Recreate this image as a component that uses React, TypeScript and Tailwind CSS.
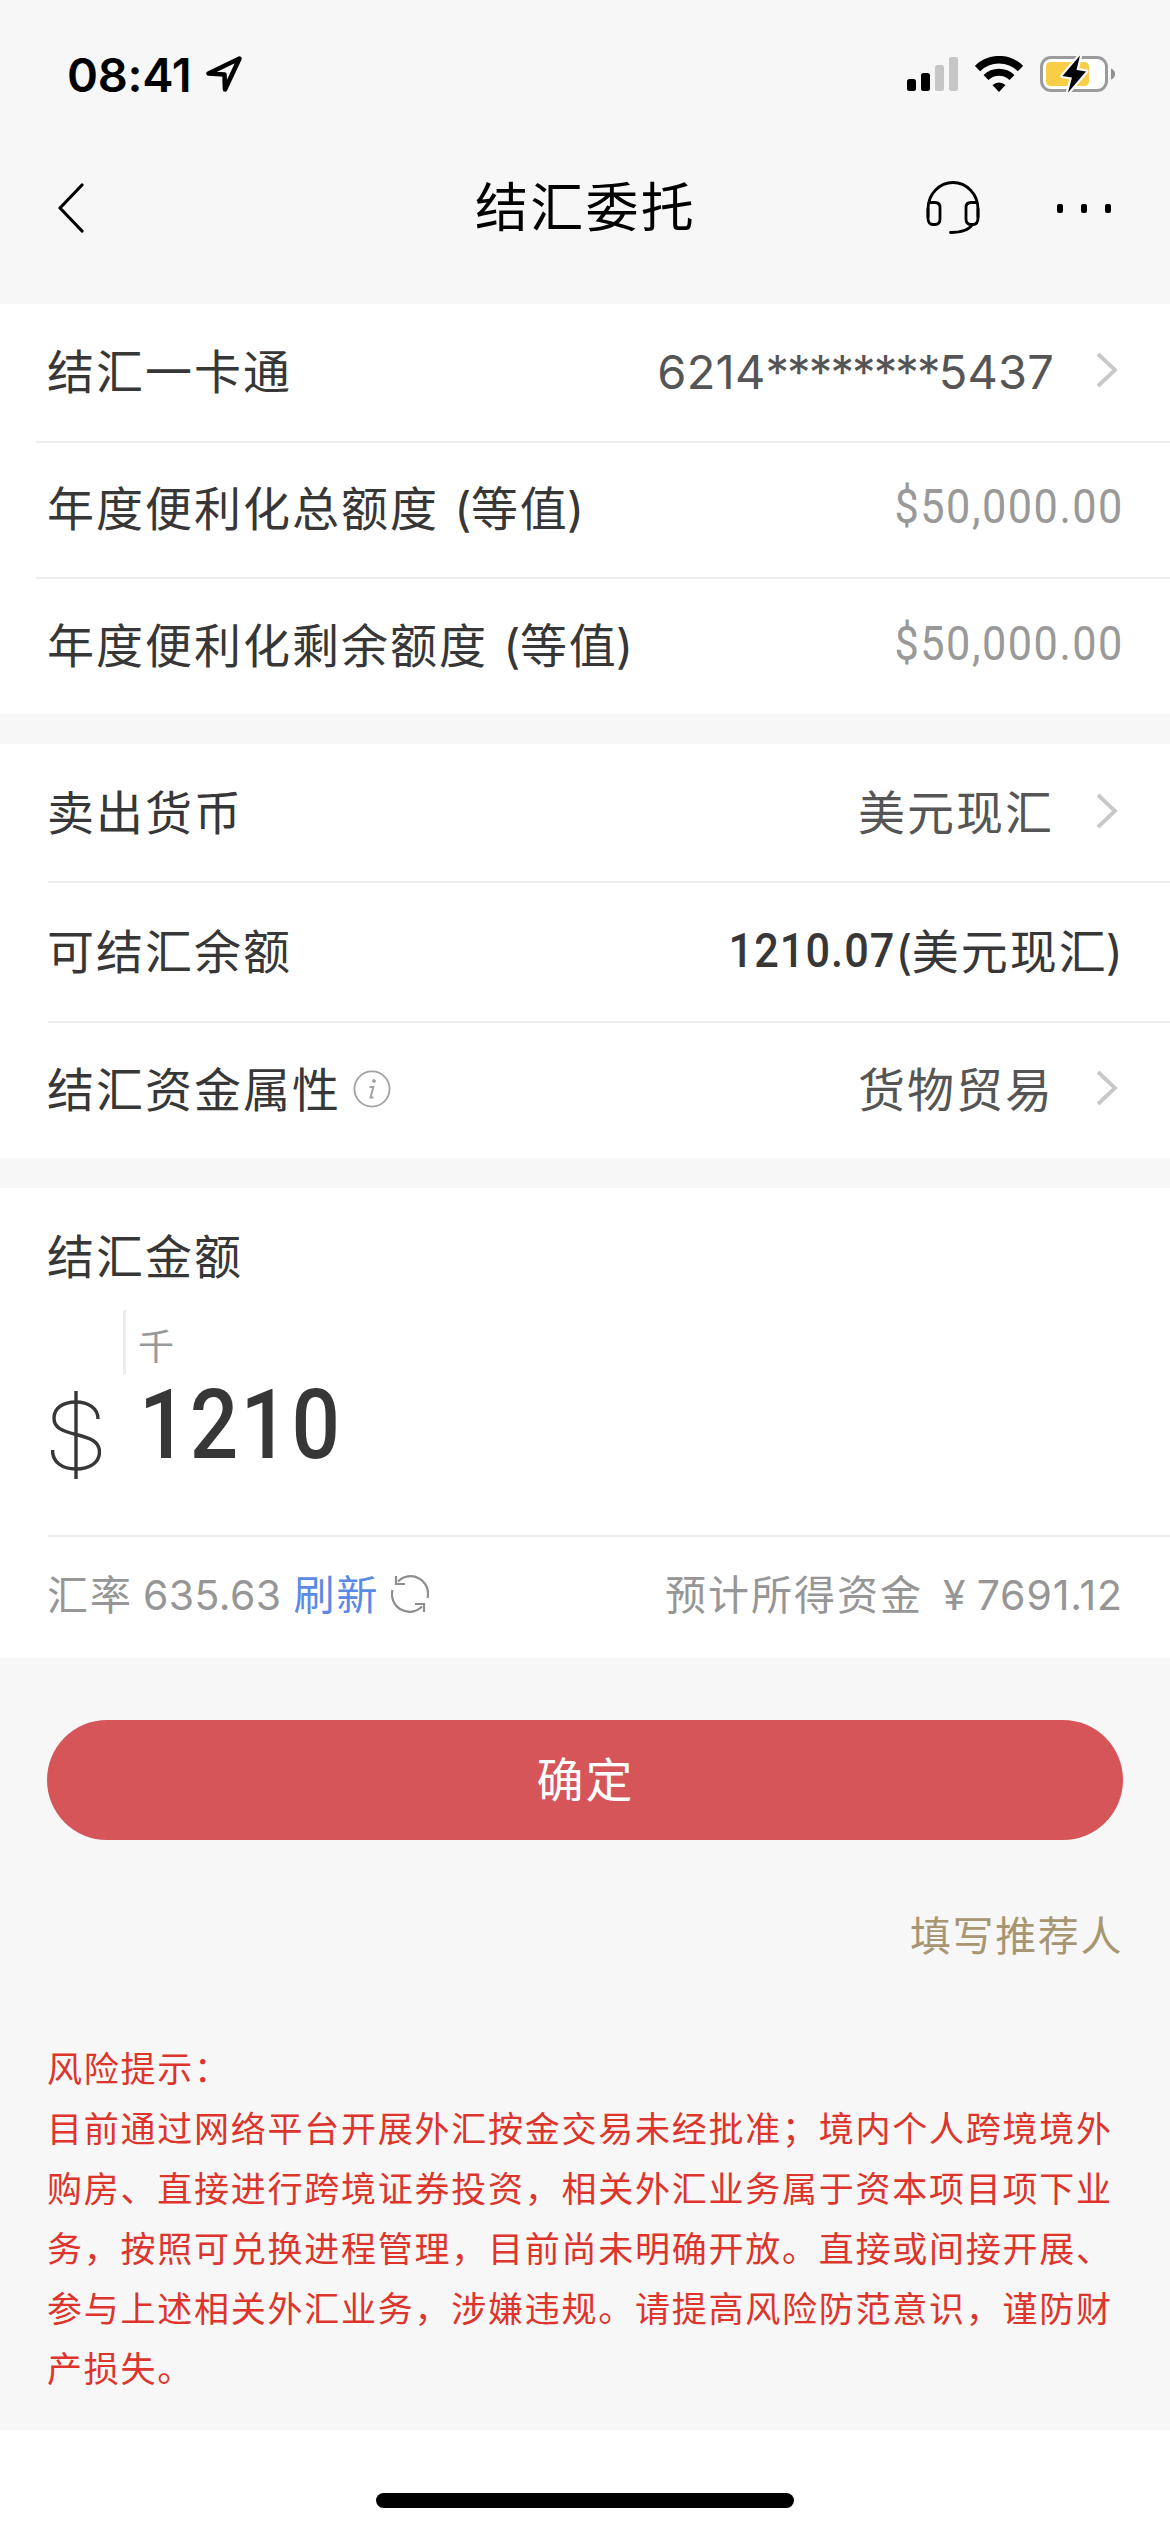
import type { ReactNode } from 'react';

const RISK_LINES = [
    '目前通过网络平台开展外汇按金交易未经批准；境内个人跨境境外',
    '购房、直接进行跨境证券投资，相关外汇业务属于资本项目项下业',
    '务，按照可兑换进程管理，目前尚未明确开放。直接或间接开展、',
    '参与上述相关外汇业务，涉嫌违规。请提高风险防范意识，谨防财',
    '产损失。',
];

function StatusBar() {
    return (
        <div className="h-[148px] pl-[67px] pr-[54px] flex items-center justify-between text-black">
            <div className="flex items-center">
                <span className="w-[138px] text-[47px] leading-none font-semibold tracking-[-0.3px]">08:41</span>
                <svg width="38" height="38" viewBox="0 0 38 38" fill="none" stroke="currentColor" strokeWidth="4.6" strokeLinejoin="round">
                    <path d="M34.5 3.5 L3.5 18.5 L19.5 19.5 L20 34.5 Z" />
                </svg>
            </div>
            <div className="flex items-center">
                <svg width="52" height="36" viewBox="0 0 52 36">
                    <rect x="0" y="23" width="9" height="12" rx="2.5" fill="#000" />
                    <rect x="14" y="17" width="9" height="18" rx="2.5" fill="#000" />
                    <rect x="28" y="9" width="9" height="26" rx="2.5" fill="#c6c6c6" />
                    <rect x="42" y="1" width="9" height="34" rx="2.5" fill="#c6c6c6" />
                </svg>
                <svg className="ml-4" width="48" height="36" viewBox="0 0 48 36" fill="none">
                    <path d="M2.5 12.5 A30.5 30.5 0 0 1 45.5 12.5" stroke="#000" strokeWidth="7.5" />
                    <path d="M11 21.5 A18.5 18.5 0 0 1 37 21.5" stroke="#000" strokeWidth="7" />
                    <path d="M24 36 L17.5 29 A9.5 9.5 0 0 1 30.5 29 Z" fill="#000" />
                </svg>
                <svg className="ml-[17px]" width="76" height="38" viewBox="0 0 76 38">
                    <rect x="1.5" y="2.5" width="65" height="33" rx="9.5" fill="#fff" stroke="#9b9b9d" strokeWidth="3" />
                    <path d="M71 13.5 Q75 15 75 19 Q75 23 71 24.5 Z" fill="#8f8f91" />
                    <rect x="6" y="7" width="43" height="24" rx="4.5" fill="#f8ce46" />
                    <path d="M40 0.5 L22.5 21 L32 22.5 L28 37.5 L46 16.5 L36.5 15 Z" fill="#000" stroke="#f7f7f7" strokeWidth="4.5" strokeLinejoin="round" paintOrder="stroke" />
                </svg>
            </div>
        </div>
    );
}

function NavBar() {
    return (
        <div className="h-[156px] pb-[36px] px-[56px] grid grid-cols-[1fr_auto_1fr] items-center text-black">
            <svg width="28" height="50" viewBox="0 0 28 50" fill="none" stroke="currentColor" strokeWidth="3.2" strokeLinecap="round" strokeLinejoin="round">
                <path d="M26 2 L4 25 L26 48" />
            </svg>
            <h1 className="pt-px pl-px text-[53px] leading-none tracking-[2.2px]">结汇委托</h1>
            <div className="flex items-center justify-end">
                <svg width="56" height="54" viewBox="0 0 56 54" fill="none" stroke="currentColor" strokeWidth="2.8" strokeLinecap="round">
                    <path d="M3 36 V28 A25 26.5 0 0 1 53 28 V36" />
                    <path d="M5 21.5 H10 Q15 21.5 15 26.5 V38 Q15 43.5 10 43.5 H8 Q3 43.5 3 37 V28" />
                    <path d="M51 21.5 H46 Q41 21.5 41 26.5 V38 Q41 43.5 46 43.5 H48 Q53 43.5 53 37 V28" />
                    <path d="M47 44 Q42 51.5 25.5 51.5" />
                </svg>
                <div className="ml-[76px] mr-[3px] flex gap-[18px]">
                    <i className="w-[6px] h-[9px] rounded-[2px] bg-black" />
                    <i className="w-[6px] h-[9px] rounded-[2px] bg-black" />
                    <i className="w-[6px] h-[9px] rounded-[2px] bg-black" />
                </div>
            </div>
        </div>
    );
}

function Chevron() {
    return (
        <svg className="ml-[42px] mr-[4px] mb-[3px]" width="22" height="36" viewBox="0 0 22 36" fill="none" stroke="#c8c8c8" strokeWidth="3.8">
            <path d="M2 2 L19 18 L2 34" />
        </svg>
    );
}

function Row({ label, className, children }: { label: ReactNode; className: string; children: ReactNode }) {
    return (
        <div className={`flex items-center justify-between pr-[48px] border-[#eeeeee] ${className}`}>
            <div className="-ml-px flex items-center text-[47px] leading-none tracking-[2px] text-[#373737] whitespace-pre">{label}</div>
            <div className="flex items-center text-[47px] leading-none tracking-[2px] text-[#555]">{children}</div>
        </div>
    );
}

function Parens({ children }: { children: string }) {
    return (
        <span className="whitespace-pre">
            <span className="tracking-[-0.5px]">(</span>
            {children}
            <span className="-ml-[2px] tracking-[-1px]">)</span>
        </span>
    );
}

function Quota() {
    return (
        <span className="-mr-[2px] mb-[3px] font-['Roboto'] font-normal text-[48px] tracking-[1.7px] text-[#999] origin-right scale-x-90">
            $50,000.00
        </span>
    );
}

export default function App() {
    return (
        <div className="w-[1170px] h-[2532px] overflow-hidden bg-[#f7f7f7] flex flex-col font-['Inter','Noto_Sans_CJK_SC',sans-serif]">
            <StatusBar />
            <NavBar />

            <section className="bg-white pl-9 h-[410px]">
                <Row label="结汇一卡通" className="h-[139px] pl-3 pb-[3px] border-b-2">
                    <span className="text-[47px]">
                        <span className="tracking-[0.2px]">6214</span>
                        <span className="tracking-[-1.9px]">********</span>
                        <span className="tracking-[0.2px]">5437</span>
                    </span>
                    <Chevron />
                </Row>
                <Row label={<>年度便利化总额度 <Parens>等值</Parens></>} className="h-[136px] pl-3 pb-[3px] border-b-2">
                    <Quota />
                </Row>
                <Row label={<>年度便利化剩余额度 <Parens>等值</Parens></>} className="h-[135px] pl-3 pb-[3px]">
                    <Quota />
                </Row>
            </section>

            <section className="bg-white pl-12 mt-[30px] h-[414px]">
                <Row label="卖出货币" className="h-[139px] pb-px border-b-2">
                    美元现汇
                    <Chevron />
                </Row>
                <Row label="可结汇余额" className="h-[140px] pb-[2px] border-b-2">
                    <span className="flex items-center text-[#373737]">
                        <b className="font-['Roboto'] font-medium text-[48px] tracking-[1.2px] origin-right scale-x-90">1210.07</b>
                        <Parens>美元现汇</Parens>
                    </span>
                </Row>
                <Row
                    label={
                        <>
                            结汇资金属性
                            <svg className="ml-[12px]" width="38" height="38" viewBox="0 0 38 38" fill="none" stroke="#a3a3a3">
                                <circle cx="19" cy="19" r="17.6" strokeWidth="1.8" />
                                <circle cx="21" cy="11" r="1.4" fill="#a3a3a3" />
                                <path d="M16.5 17 H20.3 L17.6 27.5 H20.5" strokeWidth="2" />
                            </svg>
                        </>
                    }
                    className="h-[135px] pb-[3px]"
                >
                    货物贸易
                    <Chevron />
                </Row>
            </section>

            <section className="bg-white pl-12 mt-[30px] h-[470px]">
                <div className="-ml-px h-[122px] pt-[45px] text-[47px] leading-none tracking-[2px] text-[#373737]">结汇金额</div>
                <div className="ml-[75px] h-[64px] w-fit border-l-[3px] border-[#ececec] pl-[12px] pt-[19px] text-[36px] leading-none text-[#999]">千</div>
                <div className="h-[161px] flex text-[#373737]">
                    <svg className="mt-[17px] ml-[3px]" width="50" height="88" viewBox="0 0 50 88" fill="none" stroke="currentColor" strokeWidth="3.4">
                        <path d="M25 0 V88" />
                        <path d="M47 28 C47 17 37 11 25 11 C12 11 3 17 3 27 C3 37 11 40 25 43.5 C39 47 48.5 50 48.5 61 C48.5 72 38 78 25 78 C11 78 1.5 71 1.5 59" />
                    </svg>
                    <b className="font-['Roboto'] font-medium ml-[38px] mt-px text-[97px] leading-[100px] tracking-[2.6px] origin-left scale-x-[0.88]">1210</b>
                </div>
                <div className="h-[121px] pb-[3px] border-t-2 border-[#eeeeee] pr-[47px] flex items-center justify-between text-[41px] leading-none text-[#969696]">
                    <div className="-ml-px flex items-center">
                        <span className="tracking-[2px]">汇率</span>
                        <span className="ml-[10px] text-[41px] tracking-[0.4px]">635.63</span>
                        <span className="ml-[12px] tracking-[2px] text-[#5b8ae6]">刷新</span>
                        <svg className="ml-[11px] mb-[3px]" width="38" height="38" viewBox="0 0 38 38" fill="none" stroke="#8e8e8e" strokeWidth="2.2">
                            <path d="M36.5 23 A17.5 17.5 0 0 0 7 6.5" />
                            <path d="M5 1 V9 H14" />
                            <path d="M1.5 15 A17.5 17.5 0 0 0 31 31.5" />
                            <path d="M33 37 V29 H24" />
                        </svg>
                    </div>
                    <div className="flex items-center">
                        <span className="tracking-[2px]">预计所得资金</span>
                        <span className="ml-[20px] text-[41px]">¥</span>
                        <span className="ml-[11px] text-[41px] tracking-[0.9px]">7691.12</span>
                    </div>
                </div>
            </section>

            <button className="mt-[62px] mx-[47px] pl-px h-[120px] rounded-full bg-[#d65559] text-white text-[47px] tracking-[2px]">
                确定
            </button>
            <a className="mt-[73px] mr-[47px] self-end text-[41px] leading-[46px] tracking-[1.6px] text-[#a89672]">填写推荐人</a>

            <div className="mt-[80px] pl-[47px] text-[35px] leading-[60px] tracking-[1.75px] text-[#dd342b] whitespace-nowrap">
                <p>风险提示：</p>
                {RISK_LINES.map((line) => (
                    <p key={line}>{line}</p>
                ))}
            </div>

            <footer className="mt-auto h-[102px] shrink-0 bg-white flex justify-center items-end pb-6">
                <div className="w-[418px] h-[15px] rounded-full bg-black" />
            </footer>
        </div>
    );
}
